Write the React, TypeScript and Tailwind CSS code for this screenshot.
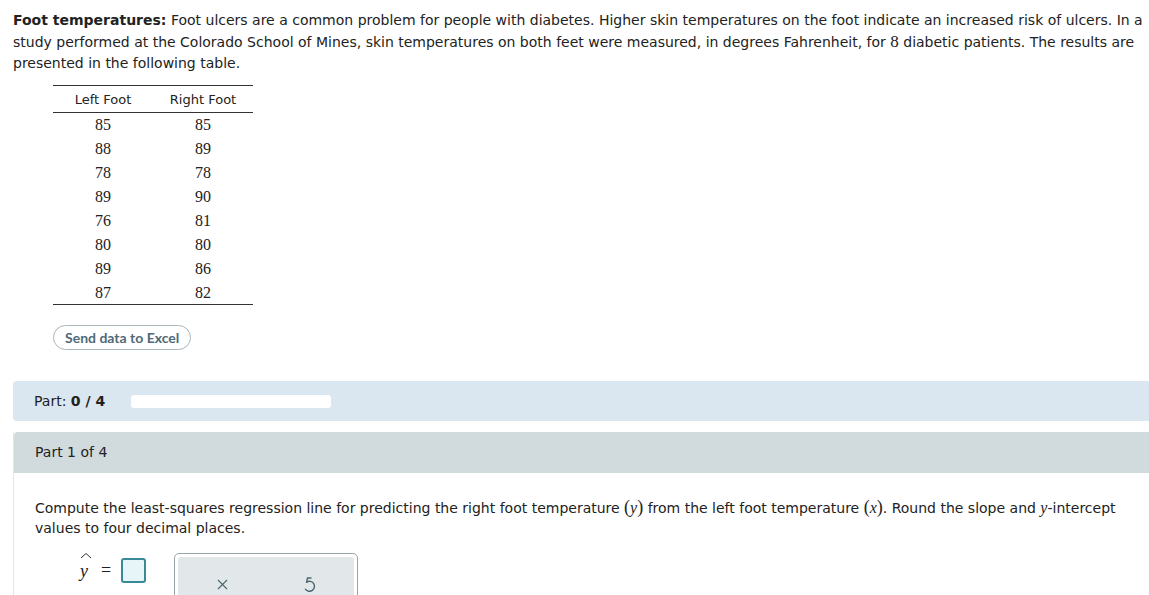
import { X } from 'lucide-react';

const LEFT = [85, 88, 78, 89, 76, 80, 89, 87];
const RIGHT = [85, 89, 78, 90, 81, 80, 86, 82];

const serif = { fontFamily: '"Liberation Serif", "Times New Roman", serif' };

function MathVar({ children }: { children: React.ReactNode }) {
  return <span className="italic text-[16px]" style={serif}>{children}</span>;
}

function Paren({ children }: { children: React.ReactNode }) {
  return <span className="text-[18px]" style={serif}>{children}</span>;
}

function UndoIcon() {
  return (
    <svg width="16" height="17" viewBox="0 0 16 17" fill="none" stroke="#4b6470" strokeWidth="1.4" strokeLinecap="round" strokeLinejoin="round">
      <path d="M9 2 H5.5 L4.6 6.2" />
      <path d="M4.6 6.2 A5 5 0 1 1 3.4 13.2" />
    </svg>
  );
}

export default function App() {
  return (
    <div className="w-[1149px] h-[595px] overflow-hidden bg-white text-[#222] text-[14px] leading-[21px]" style={{ fontFamily: '"DejaVu Sans", Verdana, sans-serif' }}>
      <div className="pl-[13px] pt-[10px]">
        <p>
          <b>Foot temperatures:</b> Foot ulcers are a common problem for people with diabetes. Higher skin temperatures on the foot indicate an increased risk of ulcers. In a{' '}
          study performed at the Colorado School of Mines, skin temperatures on both feet were measured, in degrees Fahrenheit, for <span className="text-[17px]" style={serif}>8</span> diabetic patients. The results are{' '}
          presented in the following table.
        </p>
      </div>

      {/* Table */}
      <div className="ml-[53px] mt-[11px] w-[200px]">
        <table className="w-full border-collapse border-t border-b border-[#333]">
          <thead>
            <tr className="border-b border-[#333]">
              <th className="w-[100px] h-[27px] font-normal text-[13px] text-center">Left Foot</th>
              <th className="w-[100px] h-[27px] font-normal text-[13px] text-center">Right Foot</th>
            </tr>
          </thead>
          <tbody className="text-[16px]" style={serif}>
            {LEFT.map((l, i) => (
              <tr key={i}>
                <td className="h-[24px] text-center">{l}</td>
                <td className="h-[24px] text-center">{RIGHT[i]}</td>
              </tr>
            ))}
          </tbody>
        </table>
      </div>

      <div className="ml-[53px] mt-[20px]">
        <button className="h-[25px] px-[11px] rounded-full border border-[#a9b6bc] text-[14px] font-bold text-[#4f6a78] bg-white" style={{ fontFamily: 'Lato, "Open Sans", sans-serif' }}>
          Send data to Excel
        </button>
      </div>

      {/* Part progress */}
      <div className="ml-[13px] mt-[31px] h-[40px] bg-[#dae6f0] rounded-l-[4px] flex items-center pl-[21px]">
        <span>Part: <b>0 / 4</b></span>
        <div className="ml-[26px] w-[200px] h-[13px] bg-white rounded-[3px]" />
      </div>

      {/* Part 1 */}
      <div className="ml-[13px] mt-[11px] border-l border-[#e2e6e8]">
        <div className="h-[41px] bg-[#d1dadd] rounded-tl-[4px] flex items-center pl-[21px]">Part 1 of 4</div>
        <div className="pl-[21px] pt-[24px]">
          <p className="leading-[20px]">
            Compute the least-squares regression line for predicting the right foot temperature <Paren>(</Paren><MathVar>y</MathVar><Paren>)</Paren> from the left foot temperature <Paren>(</Paren><MathVar>x</MathVar><Paren>)</Paren>. Round the slope and <MathVar>y</MathVar>-intercept
            <br />values to four decimal places.
          </p>
          <div className="flex items-start mt-[15px]">
            <div className="ml-[45px] mt-[5px] flex items-center gap-[9px]">
              <span className="relative w-[12px] text-[18px] leading-[20px]" style={serif}>
                <svg className="absolute -top-[9px] left-[0px]" width="12" height="7" viewBox="0 0 12 7" fill="none" stroke="#333" strokeWidth="1">
                  <path d="M1 6 L6 1.5 L11 6" />
                </svg>
                <i>y</i>
              </span>
              <span className="text-[18px]" style={serif}>=</span>
              <div className="ml-[1px] w-[25px] h-[25px] rounded-[3px] border-2 border-[#3a8996] bg-[#e8f5f8]" />
            </div>
            <div className="ml-[28px] w-[184px] h-[60px] border border-[#9aa5aa] rounded-[5px] p-[3px] bg-white">
              <div className="h-full bg-[#e2e7e9] rounded-[3px] flex items-start pt-[19px]">
                <div className="w-1/2 flex justify-center"><X className="w-[17px] h-[17px] text-[#4b6470]" strokeWidth={1.5} /></div>
                <div className="w-1/2 flex justify-center"><UndoIcon /></div>
              </div>
            </div>
          </div>
        </div>
      </div>
    </div>
  );
}
